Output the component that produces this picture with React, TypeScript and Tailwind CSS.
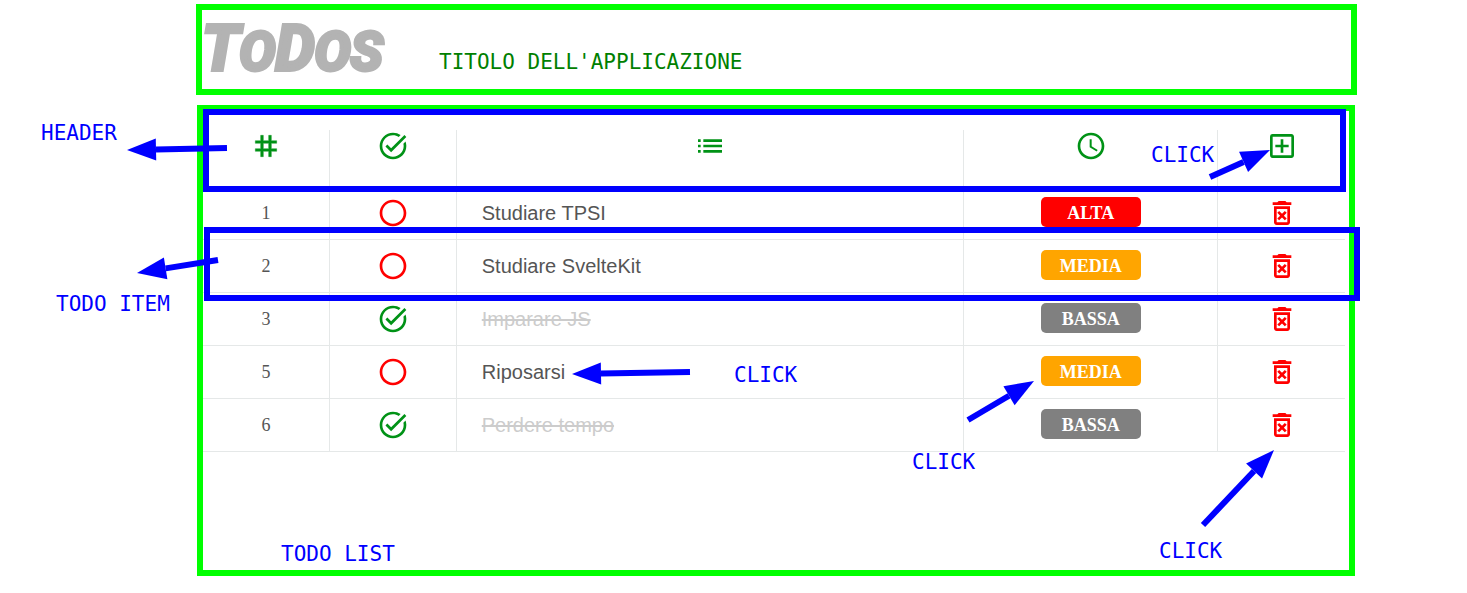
import { useState } from "react";
import {
  MdList,
  MdOutlineAddBox,
  MdOutlineDeleteForever,
  MdRadioButtonUnchecked,
  MdSchedule,
  MdTag,
  MdTaskAlt,
} from "react-icons/md";

type Priority = "ALTA" | "MEDIA" | "BASSA";

interface Todo {
  id: number;
  text: string;
  done: boolean;
  priority: Priority;
}

const initialTodos: Todo[] = [
  { id: 1, text: "Studiare TPSI", done: false, priority: "ALTA" },
  { id: 2, text: "Studiare SvelteKit", done: false, priority: "MEDIA" },
  { id: 3, text: "Imparare JS", done: true, priority: "BASSA" },
  { id: 5, text: "Riposarsi", done: false, priority: "MEDIA" },
  { id: 6, text: "Perdere tempo", done: true, priority: "BASSA" },
];

const nextPriority: Record<Priority, Priority> = {
  ALTA: "MEDIA",
  MEDIA: "BASSA",
  BASSA: "ALTA",
};

const priorityColor: Record<Priority, string> = {
  ALTA: "bg-[#ff0000]",
  MEDIA: "bg-[#ffa500]",
  BASSA: "bg-[#808080]",
};

const cell = "border-b border-r border-[#e5e8e8] p-0 last:border-r-0";
const headCell = `${cell} pb-6 align-top`;
const rowCell = `${cell} py-[10px] align-top`;
const note =
  "font-['DejaVu_Sans_Mono',monospace] text-[21px] leading-6 whitespace-nowrap";

function Label({ text, place }: { text: string; place: string }) {
  return (
    <span className={`${note} pointer-events-none absolute text-[#0000ff] ${place}`}>
      {text}
    </span>
  );
}

// Straight pointer with a filled triangular head at (x2, y2).
function Arrow({ from, to }: { from: [number, number]; to: [number, number] }) {
  const [x1, y1] = from;
  const [x2, y2] = to;
  const length = Math.hypot(x2 - x1, y2 - y1);
  const ux = (x2 - x1) / length;
  const uy = (y2 - y1) / length;
  const bx = x2 - ux * 29;
  const by = y2 - uy * 29;
  const head = [
    [x2, y2],
    [bx - uy * 11, by + ux * 11],
    [bx + uy * 11, by - ux * 11],
  ]
    .map((p) => p.join(","))
    .join(" ");
  return (
    <g>
      <line x1={x1} y1={y1} x2={bx} y2={by} stroke="#0000ff" strokeWidth={6} />
      <polygon points={head} fill="#0000ff" />
    </g>
  );
}

export default function App() {
  const [todos, setTodos] = useState(initialTodos);

  const update = (id: number, change: Partial<Todo>) =>
    setTodos(todos.map((t) => (t.id === id ? { ...t, ...change } : t)));

  const add = () => {
    const id = Math.max(0, ...todos.map((t) => t.id)) + 1;
    setTodos([...todos, { id, text: "", done: false, priority: "MEDIA" }]);
  };

  return (
    <main className="relative min-h-screen bg-white pt-1 pb-4">
      <header className="mr-[110px] ml-[196px] flex h-[91px] items-start border-6 border-[#00ff00]">
        <h1 className="w-[237px] font-['Liberation_Sans_Narrow','Roboto',sans-serif] text-[62px] leading-[78px] font-bold whitespace-nowrap text-[#b3b3b3] uppercase italic [-webkit-text-stroke:4px_#b3b3b3]">
          T<span className="text-[54px]">o</span>d<span className="text-[54px]">os</span>
        </h1>
        <p className={`${note} pt-10 text-[#008000]`}>TITOLO DELL'APPLICAZIONE</p>
      </header>

      <section className="relative mt-[10px] mr-[112px] ml-[197px] min-h-[471px] border-6 border-[#00ff00] pt-[19px] pr-1">
        <table className="w-full table-fixed border-separate border-spacing-0">
          <colgroup>
            <col className="w-1/9" />
            <col className="w-1/9" />
            <col className="w-4/9" />
            <col className="w-2/9" />
            <col className="w-1/9" />
          </colgroup>
          <thead className="text-[32px] text-[#009216]">
            <tr>
              <th className={headCell} aria-label="Numero">
                <MdTag className="mx-auto" strokeWidth={0.3} />
              </th>
              <th className={headCell} aria-label="Stato">
                <MdTaskAlt className="mx-auto" />
              </th>
              <th className={headCell} aria-label="Attività">
                <MdList className="mx-auto" />
              </th>
              <th className={headCell} aria-label="Priorità">
                <MdSchedule className="mx-auto" />
              </th>
              <th className={headCell}>
                <button type="button" aria-label="Aggiungi" onClick={add} className="mx-auto block">
                  <MdOutlineAddBox />
                </button>
              </th>
            </tr>
          </thead>
          <tbody>
            {todos.map((todo) => (
              <tr key={todo.id}>
                <td className={`${rowCell} text-center font-['Liberation_Serif',serif] text-lg leading-8 text-[#555555]`}>
                  {todo.id}
                </td>
                <td className={rowCell}>
                  <button
                    type="button"
                    aria-label={todo.done ? "Completato" : "Da fare"}
                    onClick={() => update(todo.id, { done: !todo.done })}
                    className={`mx-auto block text-[32px] ${todo.done ? "text-[#009216]" : "text-[#ff0000]"}`}
                  >
                    {todo.done ? <MdTaskAlt /> : <MdRadioButtonUnchecked />}
                  </button>
                </td>
                <td
                  className={`${rowCell} pl-[25px] font-['Liberation_Sans',sans-serif] text-xl leading-8 ${todo.done ? "text-[#cccccc] line-through" : "text-[#555555]"}`}
                >
                  {todo.text}
                </td>
                <td className={rowCell}>
                  <button
                    type="button"
                    onClick={() => update(todo.id, { priority: nextPriority[todo.priority] })}
                    className={`mx-auto block h-[30px] w-[100px] rounded-[5px] font-['Liberation_Serif',serif] text-lg leading-8 font-bold text-white ${priorityColor[todo.priority]}`}
                  >
                    {todo.priority}
                  </button>
                </td>
                <td className={rowCell}>
                  <button
                    type="button"
                    aria-label="Elimina"
                    onClick={() => setTodos(todos.filter((t) => t.id !== todo.id))}
                    className="mx-auto block text-[32px] text-[#ff0000]"
                  >
                    <MdOutlineDeleteForever />
                  </button>
                </td>
              </tr>
            ))}
          </tbody>
        </table>

        <div className="pointer-events-none absolute -top-[2px] right-[3px] left-0 h-[83px] border-6 border-[#0000ff]" />
        <div className="pointer-events-none absolute top-[116px] -right-[11px] left-px h-[74px] border-6 border-[#0000ff]" />
      </section>

      <svg
        aria-hidden="true"
        className="pointer-events-none absolute top-0 left-0 overflow-visible"
        width="1467"
        height="593"
      >
        <Arrow from={[227, 148]} to={[127, 150]} />
        <Arrow from={[218, 260]} to={[137, 273]} />
        <Arrow from={[1210, 177]} to={[1270, 150]} />
        <Arrow from={[690, 372]} to={[572, 374]} />
        <Arrow from={[968, 420]} to={[1034, 381]} />
        <Arrow from={[1203, 525]} to={[1274, 450]} />
      </svg>

      <Label text="HEADER" place="top-[121px] left-[41px]" />
      <Label text="TODO ITEM" place="top-[292px] left-[56px]" />
      <Label text="TODO LIST" place="top-[542px] left-[281px]" />
      <Label text="CLICK" place="top-[143px] left-[1151px]" />
      <Label text="CLICK" place="top-[363px] left-[734px]" />
      <Label text="CLICK" place="top-[450px] left-[912px]" />
      <Label text="CLICK" place="top-[539px] left-[1159px]" />
    </main>
  );
}
